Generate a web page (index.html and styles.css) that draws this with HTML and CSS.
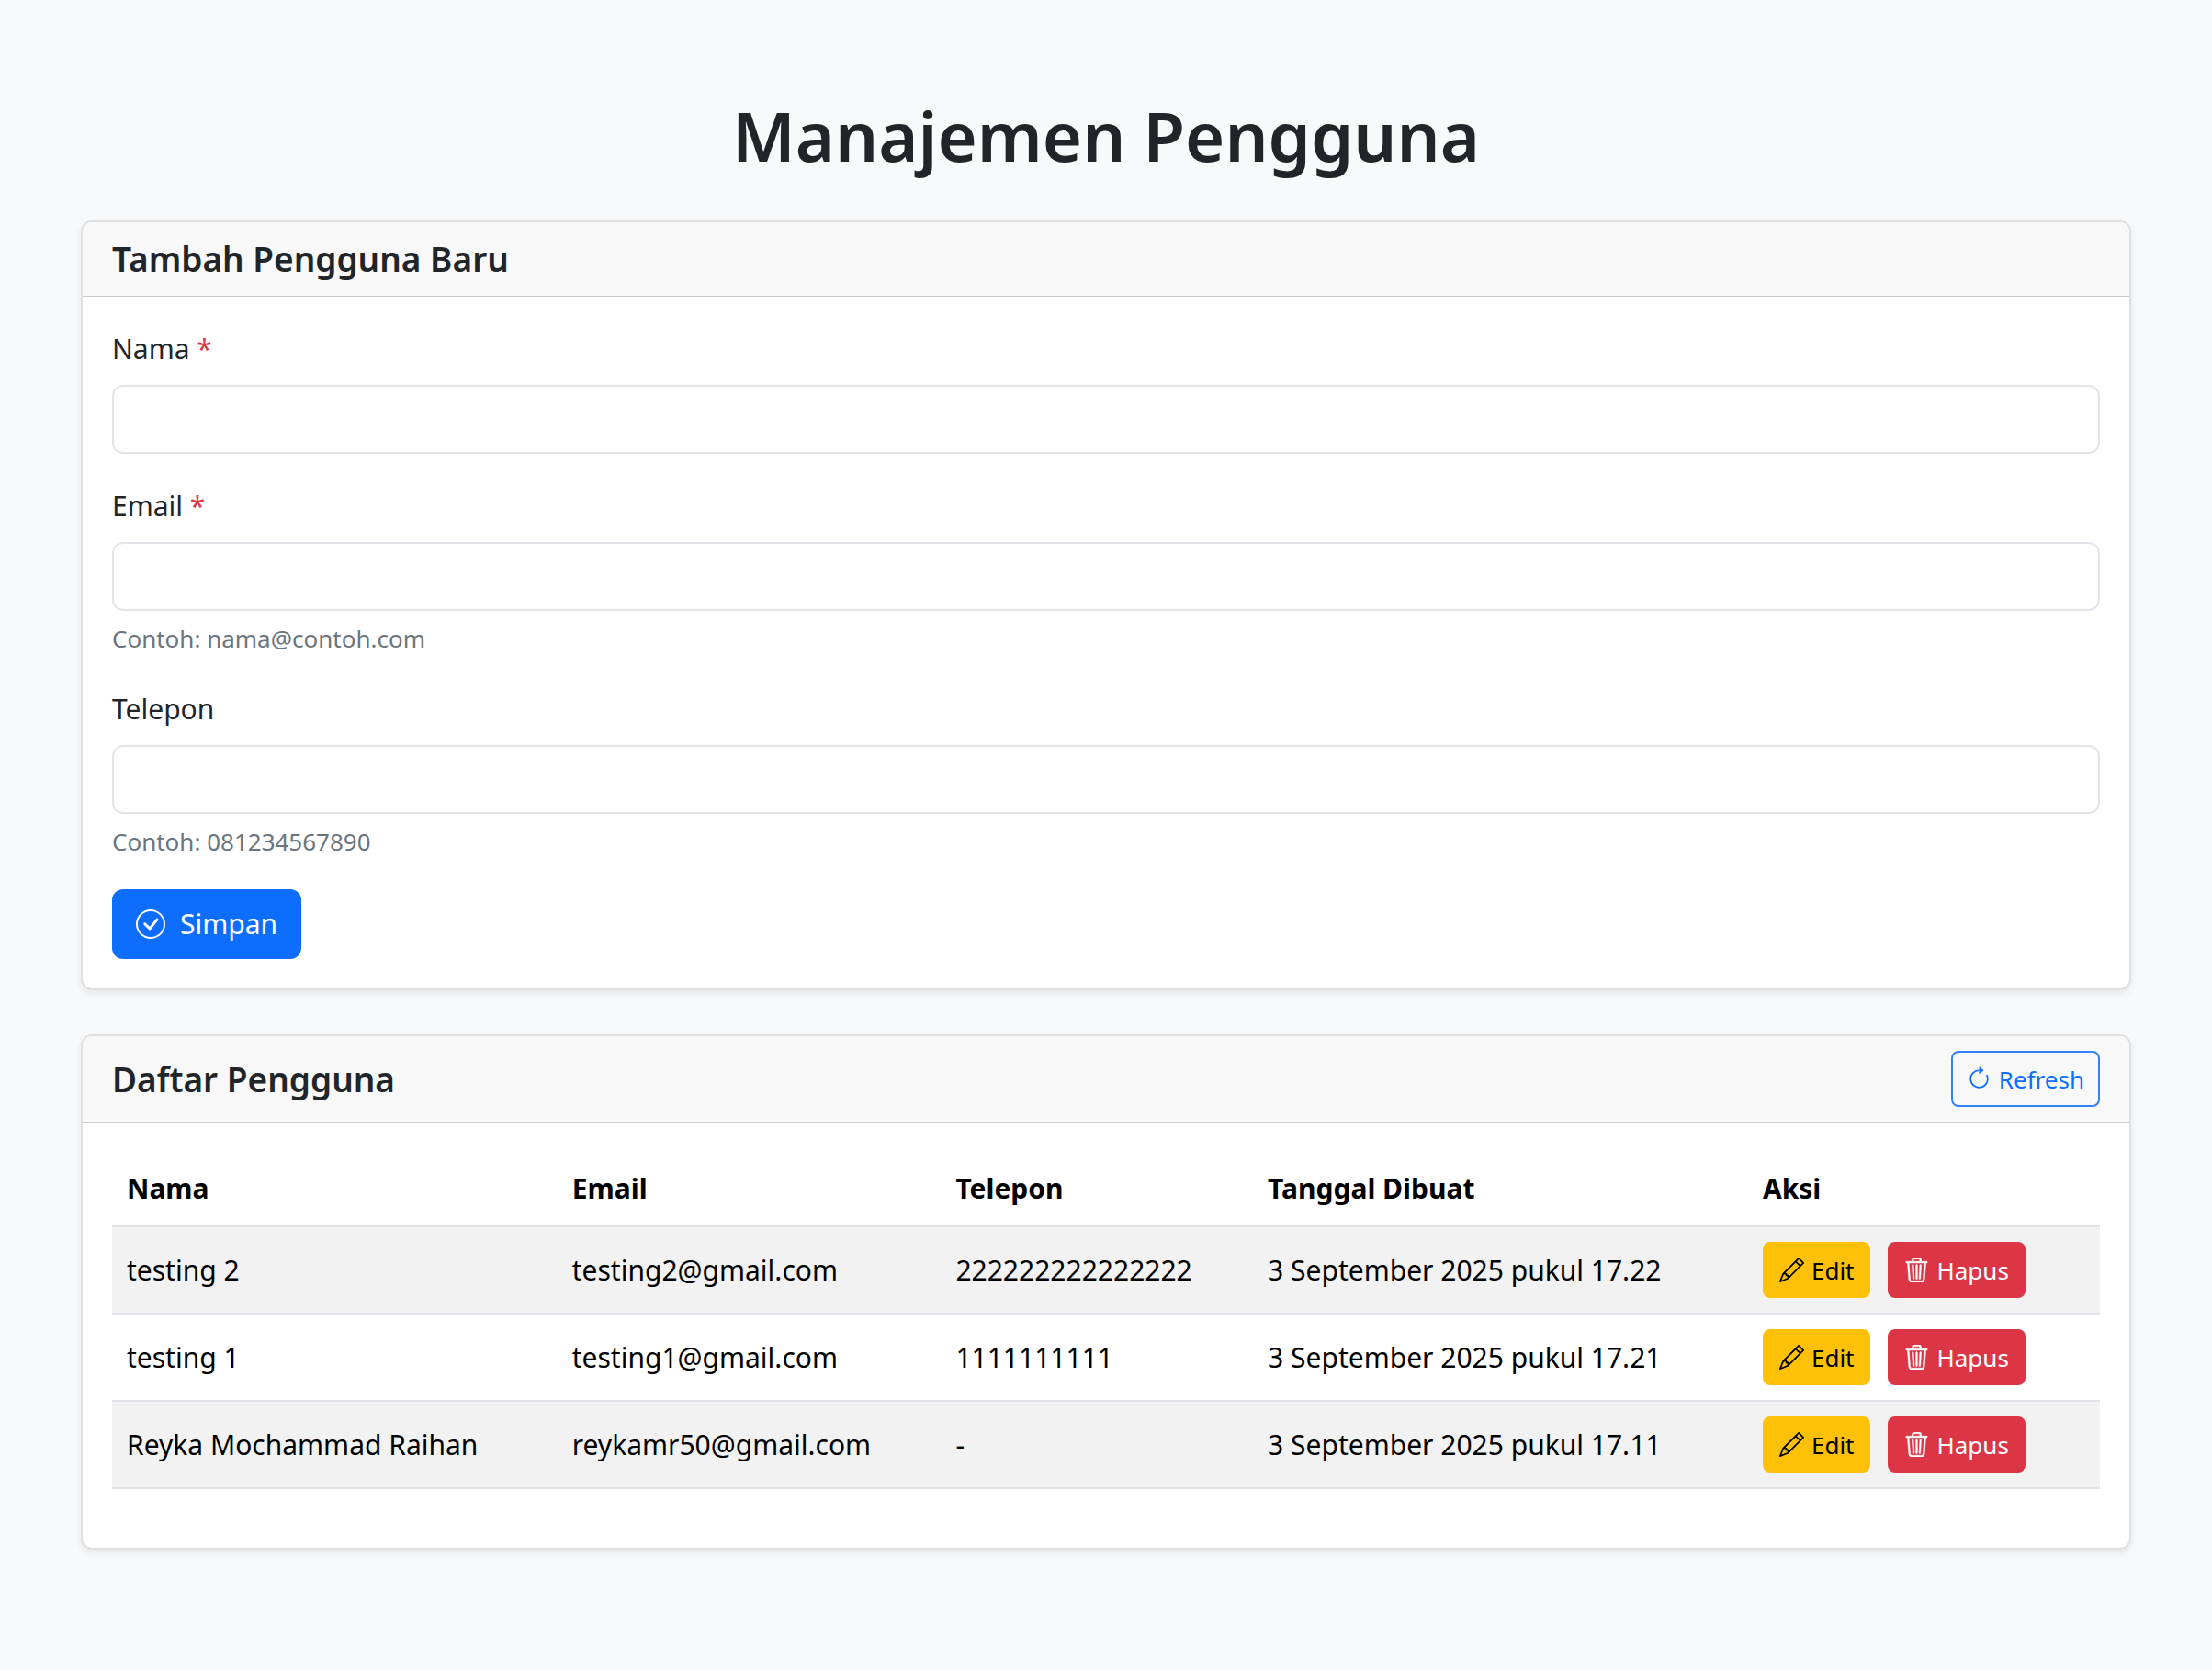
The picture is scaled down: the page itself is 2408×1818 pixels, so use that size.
FILE: index.html
```html
<!DOCTYPE html>
<html lang="id">
<head>
<meta charset="utf-8">
<meta name="viewport" content="width=device-width, initial-scale=1">
<title>Manajemen Pengguna</title>
<link rel="stylesheet" href="styles.css">
</head>
<body>
<svg class="sprite" aria-hidden="true">
  <symbol id="icon-check" viewBox="0 0 16 16">
    <path d="M8 15A7 7 0 1 1 8 1a7 7 0 0 1 0 14m0 1A8 8 0 1 0 8 0a8 8 0 0 0 0 16"/>
    <path d="M10.97 4.97a.235.235 0 0 0-.02.022L7.477 9.417 5.384 7.323a.75.75 0 0 0-1.06 1.06L6.97 11.03a.75.75 0 0 0 1.079-.02l3.992-4.99a.75.75 0 0 0-1.071-1.05"/>
  </symbol>
  <symbol id="icon-refresh" viewBox="0 0 16 16">
    <path fill-rule="evenodd" d="M8 3a5 5 0 1 0 4.546 2.914.5.5 0 0 1 .908-.417A6 6 0 1 1 8 2z"/>
    <path d="M8 4.466V.534a.25.25 0 0 1 .41-.192l2.36 1.966c.12.1.12.284 0 .384L8.41 4.658A.25.25 0 0 1 8 4.466"/>
  </symbol>
  <symbol id="icon-pencil" viewBox="0 0 16 16">
    <path d="M12.146.146a.5.5 0 0 1 .708 0l3 3a.5.5 0 0 1 0 .708l-10 10a.5.5 0 0 1-.168.11l-5 2a.5.5 0 0 1-.65-.65l2-5a.5.5 0 0 1 .11-.168zM11.207 2.5 13.5 4.793 14.793 3.5 12.5 1.207zm1.586 3L10.5 3.207 4 9.707V10h.5a.5.5 0 0 1 .5.5v.5h.5a.5.5 0 0 1 .5.5v.5h.293zm-9.761 5.175-.106.106-1.528 3.821 3.821-1.528.106-.106A.5.5 0 0 1 5 12.5V12h-.5a.5.5 0 0 1-.5-.5V11h-.5a.5.5 0 0 1-.468-.325"/>
  </symbol>
  <symbol id="icon-trash" viewBox="0 0 16 16">
    <path stroke="currentColor" stroke-width=".3" d="M6.5 1h3a.5.5 0 0 1 .5.5v1H6v-1a.5.5 0 0 1 .5-.5M11 2.5v-1A1.5 1.5 0 0 0 9.500 0h-3A1.500 1.500 0 0 0 5 1.500v1H1.500a.5.5 0 0 0 0 1h.538l.853 10.660A2 2 0 0 0 4.885 16h6.230a2 2 0 0 0 1.994-1.840l.853-10.660h.538a.5.5 0 0 0 0-1zm1.958 1-.846 10.580a1 1 0 0 1-.997.920h-6.230a1 1 0 0 1-.997-.920L3.042 3.500zm-7.487 1a.5.5 0 0 1 .528.470l.5 8.500a.5.5 0 0 1-.998.060L5 5.030a.5.5 0 0 1 .470-.530zm5.058 0a.5.5 0 0 1 .470.530l-.5 8.500a.5.5 0 1 1-.998-.060l.5-8.500a.5.5 0 0 1 .528-.470M8 4.500a.5.5 0 0 1 .5.5v8.500a.5.5 0 0 1-1 0V5a.5.5 0 0 1 .5-.5"/>
  </symbol>
</svg>

<main class="container">
  <h1 class="page-title">Manajemen Pengguna</h1>

  <section class="card">
    <header class="card-header">
      <h2 class="card-title">Tambah Pengguna Baru</h2>
    </header>
    <form class="card-body form">
      <div class="field">
        <label class="field-label" for="nama">Nama <span class="required">*</span></label>
        <input class="field-input" type="text" id="nama" name="nama" required>
      </div>
      <div class="field">
        <label class="field-label" for="email">Email <span class="required">*</span></label>
        <input class="field-input" type="email" id="email" name="email" aria-describedby="email-help" required>
        <p class="field-help" id="email-help">Contoh: nama@contoh.com</p>
      </div>
      <div class="field">
        <label class="field-label" for="telepon">Telepon</label>
        <input class="field-input" type="tel" id="telepon" name="telepon" aria-describedby="telepon-help">
        <p class="field-help" id="telepon-help">Contoh: 081234567890</p>
      </div>
      <button class="btn btn-primary" type="submit"><svg class="icon" aria-hidden="true"><use href="#icon-check"/></svg>Simpan</button>
    </form>
  </section>

  <section class="card">
    <header class="card-header">
      <h2 class="card-title">Daftar Pengguna</h2>
      <button class="btn btn-small btn-outline" type="button"><svg class="icon" aria-hidden="true"><use href="#icon-refresh"/></svg>Refresh</button>
    </header>
    <div class="card-body">
      <table class="table">
        <colgroup>
          <col class="col-name">
          <col class="col-email">
          <col class="col-phone">
          <col class="col-date">
          <col class="col-actions">
        </colgroup>
        <thead>
          <tr><th scope="col">Nama</th><th scope="col">Email</th><th scope="col">Telepon</th><th scope="col">Tanggal Dibuat</th><th scope="col">Aksi</th></tr>
        </thead>
        <tbody>
          <tr>
            <td>testing 2</td><td>testing2@gmail.com</td><td>222222222222222</td><td>3 September 2025 pukul 17.22</td>
            <td><div class="actions">
              <button class="btn btn-small btn-warning" type="button"><svg class="icon" aria-hidden="true"><use href="#icon-pencil"/></svg>Edit</button>
              <button class="btn btn-small btn-danger" type="button"><svg class="icon" aria-hidden="true"><use href="#icon-trash"/></svg>Hapus</button>
            </div></td>
          </tr>
          <tr>
            <td>testing 1</td><td>testing1@gmail.com</td><td>1111111111</td><td>3 September 2025 pukul 17.21</td>
            <td><div class="actions">
              <button class="btn btn-small btn-warning" type="button"><svg class="icon" aria-hidden="true"><use href="#icon-pencil"/></svg>Edit</button>
              <button class="btn btn-small btn-danger" type="button"><svg class="icon" aria-hidden="true"><use href="#icon-trash"/></svg>Hapus</button>
            </div></td>
          </tr>
          <tr>
            <td>Reyka Mochammad Raihan</td><td>reykamr50@gmail.com</td><td>-</td><td>3 September 2025 pukul 17.11</td>
            <td><div class="actions">
              <button class="btn btn-small btn-warning" type="button"><svg class="icon" aria-hidden="true"><use href="#icon-pencil"/></svg>Edit</button>
              <button class="btn btn-small btn-danger" type="button"><svg class="icon" aria-hidden="true"><use href="#icon-trash"/></svg>Hapus</button>
            </div></td>
          </tr>
        </tbody>
      </table>
    </div>
  </section>
</main>
</body>
</html>
```

FILE: styles.css
```css
* {
  box-sizing: border-box;
}

body {
  margin: 0;
  background: #f8f9fa;
  color: #212529;
  font-family: "Segoe UI", "Noto Sans", sans-serif;
  font-size: 30px;
  line-height: 48px;
}

.sprite {
  position: absolute;
  width: 0;
  height: 0;
}

.container {
  padding: 100px 88px 132px;
}

.page-title {
  margin: 0 0 44px;
  font-size: 74px;
  font-weight: 600;
  line-height: 96px;
  text-align: center;
}

.card {
  margin-bottom: 48px;
  overflow: hidden;
  background: #fff;
  border: 2px solid #e0e0e1;
  border-radius: 12px;
  box-shadow: 0 4px 8px rgba(0, 0, 0, 0.075);
}

.card-header {
  display: flex;
  align-items: center;
  justify-content: space-between;
  padding: 16px 32px;
  background: #f8f8f8;
  border-bottom: 1px solid #cbcbcb;
}

.card-title {
  margin: 0;
  font-size: 37px;
  font-weight: 600;
  line-height: 48px;
}

.card-body {
  padding: 32px;
}

.field {
  margin-bottom: 32px;
}

.field-label {
  display: block;
  margin-bottom: 14px;
  line-height: 50px;
}

.required {
  color: #dc3545;
}

.field-input {
  display: block;
  width: 100%;
  height: 75px;
  padding: 12px 24px;
  background: #fff;
  border: 2px solid #e2e6ea;
  border-radius: 12px;
  color: inherit;
  font: inherit;
}

.field-help {
  margin: 10px 0 0;
  color: #6c757d;
  font-size: 26px;
  line-height: 40px;
}

.btn {
  display: inline-flex;
  align-items: center;
  justify-content: center;
  gap: 16px;
  height: 76px;
  padding: 0 26px;
  border: 0;
  border-radius: 12px;
  font: inherit;
  cursor: pointer;
}

.icon {
  width: 32px;
  height: 32px;
  fill: currentColor;
}

.btn-small {
  gap: 8px;
  height: 61px;
  padding: 0 18px;
  border-radius: 8px;
  font-size: 26px;
}

.btn-small .icon {
  width: 27px;
  height: 27px;
}

.btn-primary {
  background: #0d6efd;
  color: #fff;
}

.btn-outline {
  padding: 0 15px;
  background: transparent;
  border: 2px solid #3183fc;
  color: #0d6efd;
}

.btn-warning {
  background: #ffc107;
  color: #000;
}

.btn-danger {
  background: #dc3545;
  color: #fff;
}

.table {
  width: 100%;
  margin-bottom: 32px;
  border-collapse: collapse;
  table-layout: fixed;
  color: #000;
}

.col-name { width: 22.4%; }
.col-email { width: 19.3%; }
.col-phone { width: 15.7%; }
.col-date { width: 24.9%; }
.col-actions { width: 17.7%; }

.table th,
.table td {
  padding: 16px;
  border-bottom: 2px solid #e0e4e8;
  text-align: left;
  vertical-align: middle;
}

.table th {
  font-weight: 700;
}

.table tbody tr:nth-child(odd) {
  background: #f2f2f2;
}

.actions {
  display: flex;
  gap: 19px;
}
```
